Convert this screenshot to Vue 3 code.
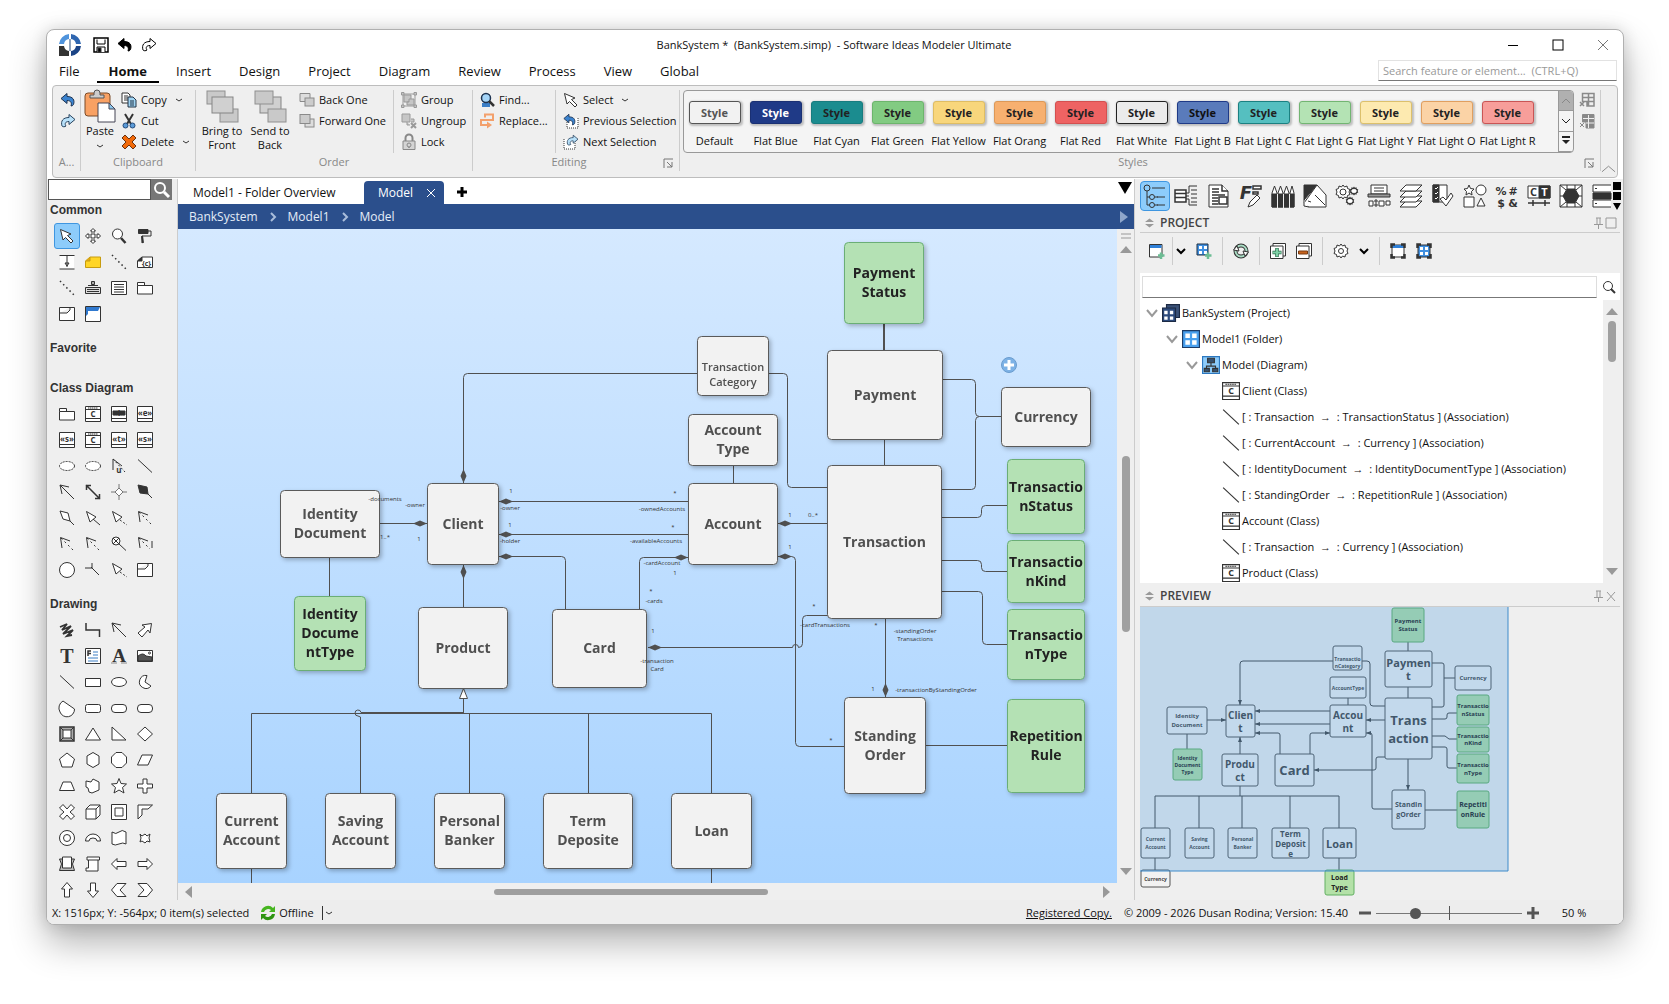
<template>
  <div class="stage">
    <div class="window">
      <header class="titlebar">
        <div class="quick">
          <svg class="logo" viewBox="0 0 22 22">
            <path d="M10 0A11 11 0 0 0 0 10H5A6 6 0 0 1 10 5Z" fill="#4f93dc" />
            <path d="M12 0A11 11 0 0 1 22 10H17A6 6 0 0 0 12 5Z" fill="#2f66b0" />
            <path d="M22 12A11 11 0 0 1 12 22V17A6 6 0 0 0 17 12Z" fill="#1c4486" />
            <path d="M0 12H5A6 6 0 0 0 10 17V22H0Z" fill="#333" />
            <path d="M11 5V17" stroke="#8fa3bd" stroke-width="2" />
          </svg>
          <button v-for="n in ['save', 'undoBlack', 'redoBlack']" :key="n" class="icon-btn" :aria-label="n">
            <svg class="pic" viewBox="0 0 16 16" v-html="icons[n]"></svg>
          </button>
        </div>
        <div class="title">BankSystem *&nbsp; (BankSystem.simp)&nbsp; - Software Ideas Modeler Ultimate</div>
        <div class="win-buttons">
          <button aria-label="Minimize"><svg viewBox="0 0 12 12"><path d="M1 6.5H11" /></svg></button>
          <button aria-label="Maximize"><svg viewBox="0 0 12 12"><rect x="1" y="1" width="10" height="10" /></svg></button>
          <button aria-label="Close" class="thin"><svg viewBox="0 0 12 12"><path d="M1 1L11 11M11 1L1 11" /></svg></button>
        </div>
      </header>

      <nav class="menubar">
        <div class="menu-items">
          <button v-for="m in menus" :key="m" class="menu-item" :class="{ active: m === activeMenu }" @click="activeMenu = m">{{ m }}</button>
        </div>
        <input class="feature-search" type="text" aria-label="Search feature" placeholder="Search feature or element...  (CTRL+Q)" />
      </nav>

      <section class="ribbon">
        <div class="group group-a">
          <div class="group-body column">
            <button class="cmd" aria-label="Undo"><svg class="pic" viewBox="0 0 16 16" v-html="icons.undo"></svg></button>
            <button class="cmd" aria-label="Redo"><svg class="pic" viewBox="0 0 16 16" v-html="icons.redo"></svg></button>
          </div>
          <div class="group-label">A...</div>
        </div>

        <div class="group group-clipboard">
          <div class="group-body">
            <button class="big-cmd paste">
              <svg class="pic32" viewBox="0 0 32 32" v-html="icons.paste"></svg>
              <span>Paste</span>
              <svg class="chev" viewBox="0 0 8 4"><path d="M1 1L4 3L7 1" /></svg>
            </button>
            <div class="column">
              <button class="cmd"><svg class="pic" viewBox="0 0 16 16" v-html="icons.copy"></svg>Copy<svg class="chev" viewBox="0 0 8 4"><path d="M1 1L4 3L7 1" /></svg></button>
              <button class="cmd"><svg class="pic" viewBox="0 0 16 16" v-html="icons.cut"></svg>Cut</button>
              <button class="cmd"><svg class="pic" viewBox="0 0 16 16" v-html="icons.delete"></svg>Delete<svg class="chev" viewBox="0 0 8 4"><path d="M1 1L4 3L7 1" /></svg></button>
            </div>
          </div>
          <div class="group-label">Clipboard</div>
        </div>

        <div class="group group-order">
          <div class="group-body">
            <button class="big-cmd"><svg class="pic32" viewBox="0 0 32 32" v-html="icons.bringFront"></svg><span>Bring to<br />Front</span></button>
            <button class="big-cmd"><svg class="pic32" viewBox="0 0 32 32" v-html="icons.sendBack"></svg><span>Send to<br />Back</span></button>
            <div class="column order-one">
              <button class="cmd"><svg class="pic" viewBox="0 0 16 16" v-html="icons.backOne"></svg>Back One</button>
              <button class="cmd"><svg class="pic" viewBox="0 0 16 16" v-html="icons.forwardOne"></svg>Forward One</button>
            </div>
            <div class="column divided">
              <button class="cmd"><svg class="pic" viewBox="0 0 16 16" v-html="icons.group"></svg>Group</button>
              <button class="cmd"><svg class="pic" viewBox="0 0 16 16" v-html="icons.ungroup"></svg>Ungroup</button>
              <button class="cmd"><svg class="pic" viewBox="0 0 16 16" v-html="icons.lock"></svg>Lock</button>
            </div>
          </div>
          <div class="group-label">Order</div>
        </div>

        <div class="group group-editing">
          <div class="group-body">
            <div class="column find">
              <button class="cmd"><svg class="pic" viewBox="0 0 16 16" v-html="icons.find"></svg>Find...</button>
              <button class="cmd"><svg class="pic" viewBox="0 0 16 16" v-html="icons.replace"></svg>Replace...</button>
            </div>
            <div class="column divided">
              <button class="cmd"><svg class="pic" viewBox="0 0 16 16" v-html="icons.cursor"></svg>Select<svg class="chev" viewBox="0 0 8 4"><path d="M1 1L4 3L7 1" /></svg></button>
              <button class="cmd"><svg class="pic" viewBox="0 0 16 16" v-html="icons.prevSel"></svg>Previous Selection</button>
              <button class="cmd"><svg class="pic" viewBox="0 0 16 16" v-html="icons.nextSel"></svg>Next Selection</button>
            </div>
          </div>
          <div class="group-label with-launcher">Editing<button class="launcher" aria-label="Editing options"><svg viewBox="0 0 10 10"><path d="M1 10V1H10M4 4L9 9M9 4V9H4" /></svg></button></div>
        </div>

        <div class="group group-styles">
          <div class="group-body">
            <div class="gallery">
              <div class="gallery-items">
                <button v-for="s in styles" :key="s.label" class="style-item">
                  <span class="swatch" :style="{ background: s.bg, borderColor: s.border, color: s.color || '#222' }">Style</span>
                  <span>{{ s.label }}</span>
                </button>
              </div>
              <div class="gallery-nav">
                <button class="off" aria-label="Up"><svg viewBox="0 0 10 6"><path d="M1 5L5 1L9 5" /></svg></button>
                <button aria-label="Down"><svg viewBox="0 0 10 6"><path d="M1 1L5 5L9 1" /></svg></button>
                <button aria-label="More"><svg viewBox="0 0 10 6"><path d="M1 -1H9" stroke-width="2" /><path d="M1 2H9L5 6Z" fill="#222" stroke="none" /></svg></button>
              </div>
            </div>
            <div class="column">
              <button class="cmd" aria-label="Clear style"><svg class="pic" viewBox="0 0 16 16" v-html="icons.gridOut"></svg></button>
              <button class="cmd" aria-label="Clear fill"><svg class="pic" viewBox="0 0 16 16" v-html="icons.gridFill"></svg></button>
            </div>
          </div>
          <div class="group-label with-launcher">Styles<button class="launcher" aria-label="Style options"><svg viewBox="0 0 10 10"><path d="M1 10V1H10M4 4L9 9M9 4V9H4" /></svg></button></div>
        </div>
        <button class="collapse" aria-label="Collapse ribbon"><svg viewBox="0 0 16 8"><path d="M1 7L8 1L15 7" /></svg></button>
      </section>

      <main class="workspace">
        <aside class="toolbox">
          <div class="tool-search">
            <input type="text" aria-label="Search tools" />
            <button aria-label="Search"><svg viewBox="0 0 18 18"><circle cx="7" cy="7" r="5" /><path d="M11 11L16 16" stroke-width="3" /></svg></button>
          </div>
          <section v-for="g in toolGroups" :key="g.name" class="tool-group">
            <h2>{{ g.name }}</h2>
            <div class="tool-grid">
              <button v-for="(t, i) in g.tools" :key="i" class="tool" :class="{ selected: t === 'cursor' }" :aria-label="t">
                <svg class="pic" viewBox="0 0 16 16" v-html="icons[t]"></svg>
              </button>
            </div>
          </section>
        </aside>

        <section class="editor">
          <div class="doc-tabs">
            <button class="doc-tab">Model1 - Folder Overview</button>
            <button class="doc-tab current">Model<svg viewBox="0 0 10 10"><path d="M1 1L9 9M9 1L1 9" /></svg></button>
            <button class="add-tab" aria-label="New tab"><svg viewBox="0 0 12 12"><path d="M6 1V11M1 6H11" /></svg></button>
            <button class="tab-list" aria-label="Tab list"><svg viewBox="0 0 14 12"><path d="M0 0H14L7 12Z" /></svg></button>
          </div>
          <div class="crumbs">
            <template v-for="(c, i) in ['BankSystem', 'Model1', 'Model']" :key="c">
              <svg v-if="i" class="crumb-sep" viewBox="0 0 6 10"><path d="M1 1L5 5L1 9" /></svg>
              <a href="#">{{ c }}</a>
            </template>
            <svg class="crumb-end" viewBox="0 0 8 12"><path d="M0 0V12L8 6Z" /></svg>
          </div>
          <div class="canvas-row">
            <svg class="canvas">
              <g :transform="`translate(${-scroll.x} ${-scroll.y})`">
                <path class="link" :d="links" />
                <path class="link double" d="M884 324V350" />
                <path class="diamond" :d="diamonds" />
                <path class="triangle" d="M463.5 688.5L467.5 698.5H459.5Z" />
                <g v-for="n in nodes" :key="n.t.join('')" class="node" :class="{ green: n.green, small: n.small }">
                  <rect :x="n.x" :y="n.y" :width="n.w" :height="n.h" rx="4" />
                  <text v-for="(line, i) in n.t" :key="i" :x="n.x + n.w / 2" :y="lineY(n, i, n.small ? 15 : 19) - 1">{{ line }}</text>
                </g>
                <text v-for="(l, i) in labels" :key="i" class="label" :x="l[1]" :y="l[2]">{{ l[0] }}</text>
                <g class="add-badge">
                  <circle cx="1009" cy="365" r="7.5" />
                  <path d="M1009 360V370M1004 365H1014" />
                </g>
              </g>
            </svg>
            <div class="vscroll">
              <svg class="grip" viewBox="0 0 10 6"><path d="M0 1H10M0 5H10" /></svg>
              <svg class="arrow" viewBox="0 0 12 7"><path d="M0 7H12L6 0Z" /></svg>
              <div class="track"><span class="before"></span><span class="thumb"></span><span class="after"></span></div>
              <svg class="arrow" viewBox="0 0 12 7"><path d="M0 0H12L6 7Z" /></svg>
            </div>
          </div>
          <div class="hscroll">
            <svg class="arrow" viewBox="0 0 7 12"><path d="M7 0V12L0 6Z" /></svg>
            <div class="track"><span class="before"></span><span class="thumb"></span><span class="after"></span></div>
            <svg class="arrow" viewBox="0 0 7 12"><path d="M0 0V12L7 6Z" /></svg>
          </div>
        </section>

        <aside class="side">
          <div class="side-tabs">
            <button v-for="(p, i) in panels" :key="p" class="side-tab" :class="{ selected: i === 0 }" :aria-label="p">
              <svg viewBox="0 0 24 24" v-html="icons[p]"></svg>
            </button>
            <svg class="more" viewBox="0 0 8 28"><path d="M0 0H8V8H0ZM0 10H8V18H0ZM0 21H8L4 28Z" /></svg>
          </div>

          <div class="panel-head">
            <svg class="updown" viewBox="0 0 10 10"><path d="M0 4H10L5 0ZM0 6H10L5 10Z" /></svg>
            <h2>PROJECT</h2>
            <svg class="pin" viewBox="0 0 24 12"><path d="M3 1H8M4 1V7M7 1V7M1 7.5H10M5.5 8V12M13 1H23V11H13Z" /></svg>
          </div>

          <div class="project-tools">
            <template v-for="(p, i) in projectTools" :key="i">
              <span v-if="p === '|'" class="sep"></span>
              <button v-else-if="p === 'v'" class="drop" aria-label="More"><svg viewBox="0 0 10 6"><path d="M1 1L5 5L9 1" /></svg></button>
              <button v-else class="icon-btn" :aria-label="p"><svg class="pic" viewBox="0 0 16 16" v-html="icons[p]"></svg></button>
            </template>
          </div>

          <div class="tree-box">
            <div class="tree-search">
              <input type="text" aria-label="Search project" />
              <button aria-label="Search"><svg viewBox="0 0 14 14"><circle cx="6" cy="6" r="4.5" /><path d="M9 9L13 13" stroke-width="2" /></svg></button>
            </div>
            <div class="tree-row">
              <ul class="tree">
                <li v-for="(r, i) in tree" :key="i" :class="`level-${r.level}`">
                  <svg v-if="r.level < 4" class="twist" viewBox="0 0 12 8"><path d="M1 1L6 7L11 1" /></svg>
                  <svg class="tree-icon" viewBox="0 0 16 16" v-html="icons[r.icon]"></svg>
                  <span>{{ r.text }}</span>
                </li>
              </ul>
              <div class="vscroll tree-scroll">
                <svg class="arrow" viewBox="0 0 12 7"><path d="M0 7H12L6 0Z" /></svg>
                <div class="track"><span class="thumb"></span><span class="after"></span></div>
                <svg class="arrow" viewBox="0 0 12 7"><path d="M0 0H12L6 7Z" /></svg>
              </div>
            </div>
          </div>

          <div class="panel-head">
            <svg class="updown" viewBox="0 0 10 10"><path d="M0 4H10L5 0ZM0 6H10L5 10Z" /></svg>
            <h2>PREVIEW</h2>
            <svg class="pin" viewBox="0 0 24 12"><path d="M3 1H8M4 1V7M7 1V7M1 7.5H10M5.5 8V12M14 2L22 11M22 2L14 11" /></svg>
          </div>
          <svg class="preview">
            <path class="mini-link" :d="miniLinks" />
            <g v-for="(n, i) in miniNodes" :key="i" class="mini-node" :class="{ green: n.green }">
              <rect :x="n.x" :y="n.y" :width="n.w" :height="n.h" rx="2" />
              <text v-for="(line, k) in n.t" :key="k" :x="n.x + n.w / 2" :y="lineY(n, k, n.lh)" :font-size="n.fs">{{ line }}</text>
            </g>
            <path class="mini-arrow" :d="miniArrows" />
            <rect class="viewport" x="-1" y="-1" width="369" height="265" />
            <path class="viewport-edge" d="M0 264H368V0" />
          </svg>
        </aside>
      </main>

      <footer class="statusbar">
        <span>X: 1516px; Y: -564px; 0 item(s) selected</span>
        <button class="offline">
          <svg class="pic" viewBox="0 0 16 16" v-html="icons.sync"></svg>Offline
        </button>
        <button class="offline-drop" aria-label="Connection"><svg class="chev" viewBox="0 0 8 4"><path d="M1 1L4 3L7 1" /></svg></button>
        <a class="registered" href="#">Registered Copy.</a>
        <span>© 2009 - 2026 Dusan Rodina; Version: 15.40</span>
        <div class="zoom">
          <button aria-label="Zoom out"><svg viewBox="0 0 12 12"><path d="M0 6H12" /></svg></button>
          <input v-model="zoom" type="range" min="0" max="200" aria-label="Zoom" />
          <button aria-label="Zoom in"><svg viewBox="0 0 12 12"><path d="M0 6H12M6 0V12" /></svg></button>
        </div>
        <span class="zoom-value">{{ zoom }} %</span>
      </footer>
    </div>
  </div>
</template>

<script setup>
import { ref } from 'vue';

const activeMenu = ref('Home');
const zoom = ref(50);
const scroll = { x: 178, y: 229 };

const menus = ['File', 'Home', 'Insert', 'Design', 'Project', 'Diagram', 'Review', 'Process', 'View', 'Global'];

const styles = [
  { label: 'Default', bg: '#f2f2f2', border: '#555', color: '#555' },
  { label: 'Flat Blue', bg: '#1f3a87', border: '#1a3073', color: '#fff' },
  { label: 'Flat Cyan', bg: '#1b8c8f', border: '#187c7f' },
  { label: 'Flat Green', bg: '#82cb82', border: '#6cb56c' },
  { label: 'Flat Yellow', bg: '#f8d67c', border: '#dfbd63' },
  { label: 'Flat Orang', bg: '#f7b070', border: '#dd9857' },
  { label: 'Flat Red', bg: '#ee6363', border: '#d45050' },
  { label: 'Flat White', bg: '#ebebeb', border: '#222' },
  { label: 'Flat Light B', bg: '#5a7bbb', border: '#1f3a87', color: '#111' },
  { label: 'Flat Light C', bg: '#55bfc0', border: '#1b8081' },
  { label: 'Flat Light G', bg: '#b4e3b4', border: '#72b572' },
  { label: 'Flat Light Y', bg: '#fdeab0', border: '#dcc06c' },
  { label: 'Flat Light O', bg: '#fbd3a6', border: '#e09f60' },
  { label: 'Flat Light R', bg: '#f79e9a', border: '#c95555' },
];

const toolGroups = [
  {
    name: 'Common',
    tools: ['cursor', 'move', 'magnify', 'roller', 'spacing', 'note', 'dotLine', 'tagNote',
      'dotLine', 'stamp', 'listBox', 'folder', 'frame', 'blueFrame'],
  },
  { name: 'Favorite', tools: [] },
  {
    name: 'Class Diagram',
    tools: ['folder', 'classC', 'classI', 'classE', 'classS', 'classC', 'classT', 'classS',
      'dashEllipse', 'dashEllipse', 'useArrow', 'line', 'openArrow', 'twoArrow', 'star4', 'diamondFull',
      'diamondEmpty', 'triArrow', 'triDash', 'dashArrow', 'dashArrow', 'dashArrow', 'crossCircle', 'dashArrowI',
      'circle', 'fork', 'triDash', 'frame'],
  },
  {
    name: 'Drawing',
    tools: ['scribble', 'zigzag', 'openArrow', 'fatArrow', 'textT', 'richText', 'wordArt', 'image',
      'line', 'rect', 'ellipse', 'pie', 'chord', 'round1', 'round2', 'round2',
      'bevel', 'triangle', 'rightTri', 'rhomb', 'pentagon', 'hexagon', 'octagon', 'parallel',
      'trapez', 'freePoly', 'star5', 'plus', 'cross', 'cube', 'innerRect', 'corner',
      'ring', 'arc', 'flag', 'burst', 'ribbonBanner', 'scrollShape', 'arrowL', 'arrowR',
      'arrowU', 'arrowD', 'chevL', 'chevR'],
  },
];

const panels = ['pTree', 'pBox', 'pDoc', 'pFormat', 'pPencils', 'pSheet', 'pGears', 'pPrint', 'pLayers', 'pCheck', 'pShapes', 'pSymbols', 'pCT', 'pHex', 'pRows'];
const projectTools = ['addDiagram', '|', 'v', 'addFolder', '|', 'refresh', '|', 'expand', 'collapse', '|', 'gear', 'v', '|', 'locate', 'locateModel'];

const tree = [
  { level: 1, icon: 'tProject', text: 'BankSystem (Project)' },
  { level: 2, icon: 'tFolder', text: 'Model1 (Folder)' },
  { level: 3, icon: 'tDiagram', text: 'Model (Diagram)' },
  { level: 4, icon: 'classC', text: 'Client (Class)' },
  { level: 4, icon: 'line', text: '[ : Transaction  →  : TransactionStatus ] (Association)' },
  { level: 4, icon: 'line', text: '[ : CurrentAccount  →  : Currency ] (Association)' },
  { level: 4, icon: 'line', text: '[ : IdentityDocument  →  : IdentityDocumentType ] (Association)' },
  { level: 4, icon: 'line', text: '[ : StandingOrder  →  : RepetitionRule ] (Association)' },
  { level: 4, icon: 'classC', text: 'Account (Class)' },
  { level: 4, icon: 'line', text: '[ : Transaction  →  : Currency ] (Association)' },
  { level: 4, icon: 'classC', text: 'Product (Class)' },
];

const nodes = [
  { x: 844.5, y: 242.5, w: 79, h: 81, t: ['Payment', 'Status'], green: true },
  { x: 697.5, y: 336.5, w: 71, h: 59, t: ['Transaction', 'Category'], small: true, dy: 9 },
  { x: 688.5, y: 414.5, w: 89, h: 51, t: ['Account', 'Type'] },
  { x: 688.5, y: 483.5, w: 89, h: 81, t: ['Account'] },
  { x: 827.5, y: 350.5, w: 115, h: 89, t: ['Payment'] },
  { x: 827.5, y: 465.5, w: 114, h: 153, t: ['Transaction'] },
  { x: 1001.5, y: 387.5, w: 89, h: 59, t: ['Currency'] },
  { x: 1007.5, y: 459.5, w: 77, h: 74, t: ['Transactio', 'nStatus'], green: true },
  { x: 1007.5, y: 540.5, w: 77, h: 62, t: ['Transactio', 'nKind'], green: true },
  { x: 1007.5, y: 609.5, w: 77, h: 70, t: ['Transactio', 'nType'], green: true },
  { x: 1007.5, y: 699.5, w: 77, h: 93, t: ['Repetition', 'Rule'], green: true },
  { x: 844.5, y: 697.5, w: 81, h: 96, t: ['Standing', 'Order'] },
  { x: 280.5, y: 490.5, w: 99, h: 67, t: ['Identity', 'Document'] },
  { x: 294.5, y: 596.5, w: 71, h: 74, t: ['Identity', 'Docume', 'ntType'], green: true },
  { x: 427.5, y: 483.5, w: 71, h: 81, t: ['Client'] },
  { x: 418.5, y: 607.5, w: 89, h: 81, t: ['Product'] },
  { x: 552.5, y: 609.5, w: 94, h: 78, t: ['Card'] },
  { x: 216.5, y: 793.5, w: 70, h: 75, t: ['Current', 'Account'] },
  { x: 325.5, y: 793.5, w: 70, h: 75, t: ['Saving', 'Account'] },
  { x: 434.5, y: 793.5, w: 70, h: 75, t: ['Personal', 'Banker'] },
  { x: 543.5, y: 793.5, w: 89, h: 75, t: ['Term', 'Deposite'] },
  { x: 671.5, y: 793.5, w: 80, h: 75, t: ['Loan'] },
];

const links = [
  'M884.5 440V466M733.5 466V484M329.5 558V597M463.5 564V608M885.5 618V698',
  'M463.5 484V377.5Q463.5 373.5 467.5 373.5H698',
  'M768 373.5H783.5Q787.5 373.5 787.5 377.5V483.5Q787.5 487.5 791.5 487.5H828',
  'M379 523.5H428M498 501.5H689M498 534.5H689M777 523.5H828M925 745.5H1008',
  'M498 556.5H561.5Q565.5 556.5 565.5 560.5V610',
  'M639.5 610V561.5Q639.5 557.5 643.5 557.5H689',
  'M777 556.5H791.5Q795.5 556.5 795.5 560.5V742.5Q795.5 746.5 799.5 746.5H845',
  'M828 615.5H806.5Q802.5 615.5 802.5 619.5V643.5Q802.5 647.5 798.5 647.5A3 3 0 0 0 792.5 647.5H648',
  'M942 379.5H971.5Q975.5 379.5 975.5 383.5V412.5Q975.5 416.5 979.5 416.5H1002',
  'M942 489.5H971.5Q975.5 489.5 975.5 485.5V420.5Q975.5 416.5 979.5 416.5',
  'M942 517.5H977.5Q981.5 517.5 981.5 513.5V509.5Q981.5 505.5 985.5 505.5H1008',
  'M942 560.5H977.5Q981.5 560.5 981.5 564.5V567.5Q981.5 571.5 985.5 571.5H1008',
  'M942 591.5H978.5Q982.5 591.5 982.5 595.5V640.5Q982.5 644.5 986.5 644.5H1008',
  'M463.5 698V713.5M251.5 794V713.5H711.5V794M360.5 794V717L358 716A3 3 0 1 1 361 712.5H463M469.5 794V713.5M588.5 794V713.5',
  'M251.5 868V884M711.5 868V884',
].join('');

const hDiamond = (x, y) => `M${x} ${y}L${x + 7} ${y - 3}L${x + 14} ${y}L${x + 7} ${y + 3}Z`;
const vDiamond = (x, y) => `M${x} ${y}L${x + 3} ${y + 7}L${x} ${y + 14}L${x - 3} ${y + 7}Z`;
const diamonds = [
  hDiamond(499, 501.5), hDiamond(499, 534.5), hDiamond(499, 556.5), hDiamond(413, 523.5),
  hDiamond(674, 557.5), hDiamond(778, 523.5), hDiamond(778, 556.5), hDiamond(648, 647.5),
  vDiamond(463.5, 469), vDiamond(463.5, 565), vDiamond(885.5, 683),
].join('');

const labels = [
  ['-documents', 385, 499], ['-owner', 415, 505], ['1..*', 385, 537], ['1', 419, 539],
  ['1', 511, 491], ['-owner', 510, 508], ['*', 675, 493], ['-ownedAccounts', 662, 509],
  ['1', 510, 525], ['*', 673, 527], ['-availableAccounts', 656, 541], ['-holder', 510, 541],
  ['-cardAccount', 662, 563], ['1', 675, 573], ['*', 651, 591], ['-cards', 654, 601],
  ['1', 653, 631], ['-transaction', 657, 661], ['Card', 657, 669], ['1', 790, 515],
  ['0..*', 813, 515], ['1', 790, 547], ['*', 814, 606], ['-cardTransactions', 825, 625],
  ['*', 876, 625], ['-standingOrder', 915, 631], ['Transactions', 915, 639], ['1', 873, 689],
  ['-transactionByStandingOrder', 936, 690], ['*', 831, 740],
];

const miniNodes = [
  { x: 252, y: 1, w: 32, h: 34, t: ['Payment', 'Status'], fs: 6, lh: 8, green: true },
  { x: 193, y: 39, w: 29, h: 24, t: ['Transactio', 'nCategory'], fs: 5, lh: 7, dy: 4 },
  { x: 190, y: 70, w: 36, h: 21, t: ['AccountType'], fs: 5, lh: 8 },
  { x: 245, y: 44, w: 47, h: 36, t: ['Paymen', 't'], fs: 11, lh: 13 },
  { x: 315, y: 59, w: 36, h: 24, t: ['Currency'], fs: 6, lh: 8 },
  { x: 190, y: 98, w: 36, h: 32, t: ['Accou', 'nt'], fs: 10, lh: 13 },
  { x: 245, y: 91, w: 47, h: 61, t: ['Trans', 'action'], fs: 13, lh: 18 },
  { x: 317, y: 88, w: 32, h: 30, t: ['Transactio', 'nStatus'], fs: 6, lh: 8, green: true },
  { x: 317, y: 120, w: 32, h: 25, t: ['Transactio', 'nKind'], fs: 6, lh: 7, green: true },
  { x: 317, y: 147, w: 32, h: 29, t: ['Transactio', 'nType'], fs: 6, lh: 8, green: true },
  { x: 317, y: 184, w: 32, h: 37, t: ['Repetiti', 'onRule'], fs: 7, lh: 10, green: true },
  { x: 252, y: 183, w: 33, h: 39, t: ['StandIn', 'gOrder'], fs: 7, lh: 10 },
  { x: 27, y: 100, w: 40, h: 27, t: ['Identity', 'Document'], fs: 6, lh: 9 },
  { x: 33, y: 142, w: 29, h: 31, t: ['Identity', 'Document', 'Type'], fs: 5, lh: 7, green: true },
  { x: 86, y: 98, w: 29, h: 32, t: ['Clien', 't'], fs: 10, lh: 13 },
  { x: 82, y: 147, w: 36, h: 32, t: ['Produ', 'ct'], fs: 10, lh: 13 },
  { x: 135, y: 147, w: 39, h: 32, t: ['Card'], fs: 13, lh: 13 },
  { x: 1, y: 221, w: 29, h: 30, t: ['Current', 'Account'], fs: 5, lh: 8 },
  { x: 45, y: 221, w: 29, h: 30, t: ['Saving', 'Account'], fs: 5, lh: 8 },
  { x: 88, y: 221, w: 29, h: 30, t: ['Personal', 'Banker'], fs: 5, lh: 8 },
  { x: 132, y: 221, w: 37, h: 30, t: ['Term', 'Deposit', 'e'], fs: 8, lh: 10 },
  { x: 183, y: 221, w: 33, h: 30, t: ['Loan'], fs: 11, lh: 13 },
  { x: 1, y: 263, w: 29, h: 17, t: ['Currency'], fs: 5, lh: 8 },
  { x: 185, y: 263, w: 29, h: 25, t: ['Load', 'Type'], fs: 7, lh: 10, green: true },
];

const miniLinks = [
  'M268 35V44M268 80V91M268 152V183M285 203H317M47 127V142M100 130V147M208 91V98M67 113H86M226 113H245',
  'M100 98V57Q100 54 103 54H193M222 54H227Q230 54 230 57V96Q230 99 233 99H245',
  'M292 56H302Q304 56 304 58V98Q304 100 302 100H292M304 71H315',
  'M292 112H305Q307 112 307 110V108Q307 106 309 106H317M292 129H305L309 132H317M292 140H305Q307 140 307 142V159Q307 161 309 161H317',
  'M226 126H230Q232 126 232 128V200Q232 202 234 202H252M174 163H234Q236 163 236 161V152Q236 150 238 150H245',
  'M115 104H190M115 117H190M115 126H138Q140 126 140 128V147M170 147V128Q170 126 172 126H190',
  'M100 179V189M15 221V189H199V221M59 189V221M102 189V221M150 189V221M15 251V263M199 251V263',
].join('');
const miniArrows = 'M115 104l5-2v4ZM115 117l5-2v4ZM115 126l5-2v4ZM226 113l5-2v4ZM226 126l5-2v4ZM174 163l5-2v4ZM86 113l-5-2v4ZM190 126l-5-2v4ZM100 98l-2-5h4ZM100 130l-2 5h4ZM268 183l-2-5h4Z';

const lineY = (n, i, lh) => n.y + n.h / 2 + (n.dy || 0) + (i - (n.t.length - 1) / 2) * lh;

// UML class glyphs share the framed box and differ in the letter
const classBox = (s, size = 8) =>
  `<path d="M.5 .5H15.5V15.5H.5ZM.5 3.5H15.5M.5 12.5H15.5"/><text x="8" y="11" font-size="${size}">${s}</text>`;
const stereo = (s) => `<path d="M.5 .5H15.5V15.5H.5ZM.5 12.5H15.5"/><text x="8" y="10" font-size="8">${s}</text>`;
const tiles = (x, y, s) => `<path fill="#fff" stroke="none" d="M${x} ${y}h${s}v${s}h-${s}ZM${x + s + 2} ${y}h${s}v${s}h-${s}ZM${x} ${y + s + 2}h${s}v${s}h-${s}ZM${x + s + 2} ${y + s + 2}h${s}v${s}h-${s}Z"/>`;
const squares = (list) => list.map(([x, y, w]) => `<rect x="${x}" y="${y}" width="${w}" height="${w - 5}" fill="#c9c9c9" stroke="#8f8f8f"/>`).join('');
const undoPath = 'M1 6.5L7 1.5V4.5C13 4.5 15 8 13.5 12.5C13 13.5 12 14 11 14C12 11 11 8.5 7 8.5V11.5Z';
const redoPath = 'M15 6.5L9 1.5V4.5C3 4.5 .5 8 2 13C2.5 14 5 14 6 13C4.5 11 5 8.5 9 8.5V11.5Z';
const gearPath = 'M8 1L9.5 3L12 2L12.5 4.5L15 5.5L14 8L15 10.5L12.5 11.5L12 14L9.5 13L8 15L6.5 13L4 14L3.5 11.5L1 10.5L2 8L1 5.5L3.5 4.5L4 2L6.5 3Z';

const icons = {
  save: '<path d="M1 1H15V15H1Z" stroke="#000" stroke-width="1.5"/><path d="M4 2.5V7H12V2.5M4 15V10H12V15" stroke="#000"/><path d="M5 11H8V15H5Z" fill="#000"/>',
  undoBlack: `<path d="${undoPath}" fill="#000" stroke="#000"/>`,
  redoBlack: `<path d="${redoPath}" stroke="#000"/>`,
  undo: `<path d="${undoPath}" fill="#3b83cf" stroke="#1e3350"/>`,
  redo: `<path d="${redoPath}" fill="#b8e1fa" stroke="#28435e"/>`,
  paste: '<rect x="1" y="3" width="25" height="23" rx="3" fill="#f9a163" stroke="#7a4a28"/><path d="M6 8V5H10V3A3 3 0 0 1 16 3V5H20V8Z" fill="#ccc" stroke="#555"/><path d="M14 13H25L31 19V32H14Z" stroke="#445"/><path d="M25 13V19H31Z" fill="#8cc8ee" stroke="#445"/>',
  copy: '<path d="M1 1H7L9 3V11H1Z" /><path d="M3 4H7M3 6H7M3 8H7" /><path d="M7 5H12L15 8V15H7Z" fill="#9fd3f2" stroke="#234"/><path d="M9 9H13M9 11H13M9 13H13" stroke="#234"/>',
  cut: '<path d="M4 1L10 11M12 1L6 11" stroke-width="2"/><circle cx="4.5" cy="12.5" r="2.5" fill="#5b9bd8" stroke="#234a7a"/><circle cx="11.5" cy="12.5" r="2.5" fill="#5b9bd8" stroke="#234a7a"/>',
  delete: '<path d="M1 4L4 1L8 5L12 1L15 4L11 8L15 12L12 15L8 11L4 15L1 12L5 8Z" fill="#f26a0a" stroke="#6a3210"/>',
  bringFront: squares([[1, 1, 18], [14, 19, 18]]) + '<rect x="6" y="7" width="21" height="16" fill="#d0d0d0" stroke="#858585"/>',
  sendBack: '<rect x="6" y="7" width="21" height="16" fill="#d0d0d0" stroke="#858585"/>' + squares([[1, 1, 18], [14, 19, 18]]),
  backOne: '<path d="M1 1.5H11V9.5H1Z" fill="#ddd" stroke="#8a8a8a"/><rect x="6" y="6" width="9" height="8" fill="#ccc" stroke="#8a8a8a"/>',
  forwardOne: '<rect x="6" y="6" width="9" height="8" fill="#ddd" stroke="#8a8a8a"/><rect x="1" y="1.5" width="10" height="9" fill="#ccc" stroke="#8a8a8a"/>',
  group: '<g fill="#c6c6c6" stroke="#999"><path d="M2 2H14V14H2Z" fill="none"/><path d="M3 3H10V10H3Z"/><path d="M8 7H13V13H6V10H8Z"/><path d="M.5 .5H3V3H.5ZM13 .5H15.5V3H13ZM.5 13H3V15.5H.5ZM13 13H15.5V15.5H13Z"/></g>',
  ungroup: '<g fill="#c6c6c6" stroke="#999"><path d="M1 1H9V9H1Z"/><path d="M6 9V12H9"/><path d="M10 6H13V9H10"/><path d="M10 10L15 15M15 10L10 15" stroke-width="2"/></g>',
  lock: '<g fill="#d4d4d4" stroke="#888"><path d="M4.5 7V4A3.5 3.5 0 0 1 11.5 4V7" fill="none" stroke-width="2"/><path d="M2 7H14V15.5H2Z"/><path d="M8 9V14" stroke="#666"/><circle cx="8" cy="11" r="2"/></g>',
  find: '<path d="M3 11H11V15H3Z" fill="#3b7ec6" stroke="none"/><circle cx="7" cy="6" r="4.5" fill="#a5d5f8" stroke="#1e3350" stroke-width="1.5"/><path d="M10 9L15 14" stroke-width="2.5"/>',
  replace: '<path d="M6 4.500V1.500H14V7H2V12H9" fill="none" stroke="#f3a06c" stroke-width="2"/><path d="M8 8.5L13 12L8 15.5Z" fill="#f3a06c" stroke="none"/>',
  prevSel: `<path d="M4 5V15H15V5" stroke-dasharray="1 1"/><path d="${undoPath}" fill="#3b83cf" stroke="#1e3350" transform="scale(.85)"/>`,
  nextSel: `<path d="M1 5V15H12V5" stroke-dasharray="1 1"/><path d="${redoPath}" fill="#b8e1fa" stroke="#28435e" transform="translate(3 0) scale(.8)"/>`,
  gridOut: '<g stroke="#8a8a8a" fill="#eee" stroke-width="1.5"><path d="M3.5 1.5H15V14H8V9.500H3.5ZM3.5 5.5H15M8 9.5H15M9.5 1.5V14"/><path d="M1 10L5 14M5 10L1 14"/></g>',
  gridFill: '<g stroke="#8a8a8a"><path d="M3.5 1.5H15V15H7V9H3.5Z" fill="#888"/><path d="M4 5.5H15M7 10H15M9.5 2V15" stroke="#eee"/><path d="M1 10L5 14M5 10L1 14"/></g>',

  cursor: '<path d="M1.5 1.5L4 12L6.5 9.5L12 15L14 13L8.5 7.5L12 6Z"/>',
  move: '<path d="M8 .5L10.5 3H9V7H13V5.5L15.5 8L13 10.5V9H9V13H10.5L8 15.5L5.5 13H7V9H3V10.5L.5 8L3 5.5V7H7V3H5.5Z"/>',
  magnify: '<circle cx="6.5" cy="6" r="5"/><path d="M10 10L14.5 15" stroke-width="2.5"/>',
  roller: '<path d="M1.5 1.5H11V5.5H1.5Z" fill="#333"/><path d="M11 3H14V8H5V15" fill="none"/><path d="M5 8L6 15" stroke-width="2"/>',
  spacing: '<path d="M1 1H15V15H1Z" stroke="none"/><path d="M.5 1.5H15.5M.5 15H15.5M8 2V13M6 9L8 12L10 9Z"/>',
  note: '<path d="M5 3H15.5V13.5H.5V7Z" fill="#ffd526" stroke="#c79c10"/><path d="M5 3V7H.5" fill="#e0a91a" stroke="#c79c10"/>',
  dotLine: '<path d="M1 1L15 15" stroke-dasharray="1.5 3" stroke-width="1.5"/>',
  tagNote: '<path d="M5 3H15.5V13.5H.5V7Z"/><path d="M5 3V7H.5Z" fill="#333"/><text x="9.5" y="11.5" font-size="7">{c}</text>',
  stamp: '<path d="M.5 7.5H15.5V13.5H.5Z" fill="#ddd"/><path d="M2 9.5H14M2 11.5H14"/><path d="M6.5 1.5H9.5V4.5H6.5ZM3 5.5H13" fill="#aaa"/>',
  listBox: '<path d="M.5 1.5H15.5V14.5H.5Z"/><path d="M3 4.5H13M3 7H13M3 9.5H13M3 12H13"/>',
  folder: '<path d="M.5 5.5H15.5V14H.5ZM.5 5.5V2.5H7.5V5.5"/>',
  frame: '<path d="M.5 1.5H15.5V14.5H.5ZM.5 7H8L11 4V1.5"/>',
  blueFrame: '<path d="M.5 .5H15.5V15.5H.5Z"/><path d="M1 1H15L13 5H3V8L1 10Z" fill="#3079cf" stroke="none"/>',
  classC: classBox('C') + '<path d="M3 2H13" stroke-dasharray="1.5 .5"/>',
  classI: stereo('«I»') + '<path d="M2 5H14V9H2Z" fill="#333"/>',
  classE: stereo('«e»'),
  classS: stereo('«s»'),
  classT: stereo('«t»'),
  dashEllipse: '<ellipse cx="8" cy="8" rx="7.5" ry="4.5" stroke-dasharray="2 1"/>',
  useArrow: '<path d="M2 12V1L11 8" fill="none"/><path d="M2 1L14 14" stroke-dasharray="2 2"/><text x="8" y="15" font-size="8">u</text>',
  line: '<path d="M1 1.5L15 14.5"/>',
  openArrow: '<path d="M3 10L1 1L10 3M1 1L15 15" fill="none"/>',
  twoArrow: '<path d="M1 1L15 15M1.5 6V1.5H6M14.5 10V14.5H10" fill="none" stroke-width="1.5"/>',
  star4: '<path d="M8 0V4M8 12V16M0 8H4M12 8H16M4 8L8 4L12 8L8 12Z" stroke="#777"/>',
  diamondFull: '<path d="M1 1L10 3L11 10L3 9Z" fill="#333"/><path d="M10 9L15 14"/>',
  diamondEmpty: '<path d="M1 1L9 3L11 11L4 9ZM11 11L15 15"/>',
  triArrow: '<path d="M1.5 1.5L11 7L5 12Z"/><path d="M8 9L15 15"/>',
  triDash: '<path d="M1.5 1.5L11 7L5 12Z"/><path d="M9 10L16 15" stroke-dasharray="2 2"/>',
  dashArrow: '<path d="M3 12L1.5 1.5L11 5" fill="none"/><path d="M2 2L15 15" stroke-dasharray="2 3"/>',
  dashArrowI: '<path d="M3 12L1.5 1.5L11 5" fill="none"/><path d="M2 2L13 13" stroke-dasharray="2 3"/><path d="M15 5V12"/>',
  crossCircle: '<circle cx="5" cy="5" r="4"/><path d="M2 2L8 8M8 2L2 8M8 8L15 14.5"/>',
  circle: '<circle cx="8" cy="8" r="7.5"/>',
  fork: '<path d="M0 6L7 6V1M6 5L14 13" fill="none"/>',
  scribble: '<path d="M1 5L8 2L3 8L12 4L4 12L14 8L8 14L13 13" fill="none" stroke-width="1.8"/>',
  zigzag: '<path d="M1 1V8H14.5V15" fill="none" stroke-width="1.5"/>',
  fatArrow: '<path d="M1 11L8 5L5 3L14.5 1.5L13 11L11 8L5 15Z"/>',
  textT: '<text x="8" y="15" font-size="20" font-family="Liberation Serif">T</text>',
  richText: '<path d="M.5 .5H15.5V15.5H.5Z"/><path d="M8 4H13M8 7H13M3 10H13M3 13H13" stroke="#3c7fc4"/><path d="M3 8V3H6M3 5.5H6" stroke-width="1.5"/>',
  wordArt: '<text x="8" y="14" font-size="19" font-family="Liberation Serif">A</text><path d="M0 15H6M10 15H16" stroke="#888"/>',
  image: '<path d="M.5 2.5H15.5V13.5H.5Z"/><path d="M1 8Q6 4 9 8L15 9V13H1Z" fill="#555"/><circle cx="12.5" cy="5" r="1"/>',
  rect: '<path d="M.5 4.5H15.5V12.5H.5Z"/>',
  ellipse: '<ellipse cx="8" cy="8" rx="7.5" ry="4.5"/>',
  pie: '<path d="M10 1.5A6.5 6.5 0 1 0 14 12L8 8Z"/>',
  chord: '<path d="M4 1L15.5 9A7.5 7.5 0 0 1 1 12A8 8 0 0 1 4 1Z"/>',
  round1: '<rect x=".5" y="4.5" width="15" height="8" rx="2"/>',
  round2: '<rect x=".5" y="4.5" width="15" height="8" rx="3.5"/>',
  bevel: '<path d="M1 1H15V15H1Z" fill="#aaa" stroke-width="1.5"/><path d="M4 4H12V12H4Z"/><path d="M1 1L4 4M15 1L12 4M1 15L4 12M15 15L12 12"/>',
  triangle: '<path d="M8 2L15.5 14H.5Z"/>',
  rightTri: '<path d="M1 1L15 14H1Z"/>',
  rhomb: '<path d="M8 1L15.5 8L8 15L.5 8Z"/>',
  pentagon: '<path d="M8 1L15.5 7L13 15H3L.5 7Z"/>',
  hexagon: '<path d="M8 .5L14 4V12L8 15.5L2 12V4Z"/>',
  octagon: '<path d="M5 .5H11L15.5 5V11L11 15.5H5L.5 11V5Z"/>',
  parallel: '<path d="M5 3H15.5L11 13H.5Z"/>',
  trapez: '<path d="M4 4H12L15.5 12.5H.5Z"/>',
  freePoly: '<path d="M1 3L6 4L8 1L14 4V12L7 15L4 14L3 10L1 9Z"/>',
  star5: '<path d="M8 .5L10 5.5L15.5 6L11.5 9.5L13 15L8 12L3 15L4.5 9.5L.5 6L6 5.5Z"/>',
  plus: '<path d="M6 1H10V6H15.5V10H10V15H6V10H.5V6H6Z"/>',
  cross: '<path d="M4 .5L8 5L12 .5L15.5 4L11 8L15.5 12L12 15.5L8 11L4 15.5L.5 12L5 8L.5 4Z"/>',
  cube: '<path d="M1 5H11V15H1ZM1 5L5 1H15V11L11 15M11 5L15 1"/>',
  innerRect: '<path d="M.5 .5H15.5V15.5H.5ZM4 4H12V12H4Z"/>',
  corner: '<path d="M1 1H15.5L11 5H5V11L1 15Z"/>',
  ring: '<circle cx="8" cy="8" r="7.5"/><circle cx="8" cy="8" r="3.5"/>',
  arc: '<path d="M.5 11A7.5 7 0 0 1 15.5 11H12A4 3 0 0 0 4 11Z"/>',
  flag: '<path d="M1 2Q5 5 8 2T15 2V14Q12 12 8 14T1 14Z"/>',
  burst: '<path d="M3 4L5 6L8 4L10 6L13 4L12 8L13 12L10 11L8 13L5 11L3 12L4 8Z"/>',
  ribbonBanner: '<path d="M.5 3H15.5L13.500 8L15.5 14.500H.5L2.500 8Z" fill="#bbb"/><path d="M3.5 1H12.5V12H3.5Z"/>',
  scrollShape: '<path d="M2 1H14.5V4H13V15H1V12H3.5V4H2Z"/><path d="M3.5 4H13"/>',
  arrowL: '<path d="M.5 8L6 2.5V5.5H15V10.5H6V13.5Z"/>',
  arrowR: '<path d="M15.5 8L10 2.5V5.5H1V10.5H10V13.5Z"/>',
  arrowU: '<path d="M8 .5L13.5 7H10.5V15H5.5V7H2.5Z"/>',
  arrowD: '<path d="M8 15.5L13.5 9H10.5V1H5.5V9H2.5Z"/>',
  chevL: '<path d="M6 1.5H15L9 8L15 14.5H6L.5 8Z"/>',
  chevR: '<path d="M1 1.5H10L15.5 8L10 14.5H1L7 8Z"/>',

  pTree: '<g fill="none"><circle cx="4" cy="4" r="3"/><circle cx="9" cy="13" r="2.5"/><circle cx="9" cy="21" r="2.5"/><path d="M4 7V21H6.5M4 13H6.5M9 4H22M14 13H22M14 21H22M12 13H15M12 21H15"/></g>',
  pBox: '<path d="M11 9H14V2H22M11 15H14V21H22M11 12H14M16 6H22M16 10H22M16 14H22M16 18H22" fill="none"/><path d="M0 6H11V18H0ZM0 9.5H11M0 13.5H11" stroke-width="1.5"/>',
  pDoc: '<path d="M2 1H15L21 7V23H2Z"/><path d="M15 1V7H21M5 5H12M5 8H12M5 11H18M5 14H11M5 17H11M5 20H11" stroke-width="1.5"/><path d="M12 13H20V20H12Z" stroke-width="1.5"/>',
  pFormat: '<text x="7" y="15" font-size="18" font-style="italic" font-family="DejaVu Sans">F</text><path d="M14 2H22V5H14ZM14 8H19V10H14Z" stroke-width="1.5"/><path d="M9 23L11 18L18 11L21 14L14 21Z"/>',
  pPencils: '<path d="M1 23V9L3.5 2L6 9V23ZM7 23V9L9.5 2L12 9V23ZM13 23V9L15.5 2L18 9V23ZM19 23V9L21 2L23 9V23Z" /><path d="M1 10H6V23H1ZM7 10H12V23H7ZM13 10H18V23H13ZM19 10H23V23H19Z" fill="#333"/><path d="M6.5 10V23M12.5 10V23M18.5 10V23" stroke="#eee"/>',
  pSheet: '<path d="M1 1H14L1 16Z" fill="#333"/><path d="M14 1L23 11V23H6L1 19Z"/><path d="M1 16V22L6 23M5 17L8 18M12 11L22 21" />',
  pGears: `<path d="${gearPath}"/><circle cx="8" cy="8" r="3"/><g transform="translate(15 3) scale(.5)"><path d="${gearPath}" stroke-width="2.5"/></g><g transform="translate(11 13) scale(.5)"><path d="${gearPath}" stroke-width="2.5"/></g>`,
  pPrint: '<path d="M4 1H20V10H4Z"/><path d="M7 4H17M7 7H17" /><path d="M1 10H23V13H1Z" fill="#999"/><path d="M2 17H6V22H2ZM8 16H10V18H8ZM8 20H10V22H8ZM12 17H17V22H12ZM19 17H23V21H19Z"/>',
  pLayers: '<path d="M7 17H23L17 23H1Z"/><path d="M7 12H23L17 18H1Z"/><path d="M7 7H23L17 13H1Z"/><path d="M7 1H23L17 7H1Z"/>',
  pCheck: '<path d="M2 1H16V18H2Z"/><path d="M2 1H8V18H2Z" fill="#333"/><path d="M4 4L5 5L7 3M4 9L5 10L7 8M4 14L5 15L7 13" stroke="#fff" fill="none"/><path d="M9 15L12 13L15 16L20 9L22 12L15 22Z"/>',
  pShapes: '<path d="M6 1L7.5 4.5L11 5L8.5 7.5L9 11L6 9L3 11L3.5 7.5L1 5L4.5 4.5Z"/><circle cx="18" cy="6" r="5"/><path d="M1 13H11V23H1ZM18 14L22 22H14Z"/>',
  pSymbols: '<g font-size="11" font-family="DejaVu Sans"><text x="6" y="11">%</text><text x="18" y="11">#</text><text x="6" y="23">$</text><text x="18" y="23">&amp;</text></g>',
  pCT: '<path d="M1 2H23V14H1Z"/><path d="M12 2H23V14H12Z" fill="#333"/><text x="6.5" y="12" font-size="11">C</text><text x="17.5" y="12" font-size="11" fill="#fff">T</text><path d="M1 19H23M6 16V22M18 16V22" stroke-width="1.5"/>',
  pHex: '<path d="M1 1H23V23H1Z"/><path d="M1 1L7 6M23 1L17 6M1 23L7 18M23 23L17 18M1 12H5M19 12H23M8 1V5M16 1V5M8 19V23M16 19V23"/><path d="M8 5H16L20 12L16 19H8L4 12Z" fill="#333"/>',
  pRows: '<path d="M19 1H1V8H19M19 16H1V23H19"/><path d="M1 9H19V15H1Z" fill="#333"/><path d="M3 4.5H5M3 19.5H5"/>',

  addDiagram: '<path d="M.5 1.5H13V14H.5Z"/><path d="M1 2H12.5V5H1Z" fill="#2f80d8" stroke="none"/><path d="M12 9.5V16M9 12.5H15.5" stroke="#6cbd94" stroke-width="2.5"/>',
  addFolder: '<path d="M1 1H12V12H1Z" fill="#3f8fe0" stroke="#234"/>' + tiles(3, 3, 3) + '<path d="M12 9.5V16M9 12.5H15.5" stroke="#6cbd94" stroke-width="2.5"/>',
  refresh: '<circle cx="8" cy="8" r="5.5" fill="none" stroke="#333" stroke-width="4"/><circle cx="8" cy="8" r="5.5" fill="none" stroke="#a9dcc4" stroke-width="2"/><path d="M10 8L15.500 9L12 13ZM6 8L.5 7L4 3Z"/>',
  expand: '<path d="M3 .5H15.5V13H3Z"/><path d="M.5 3H13V15.5H.5Z"/><path d="M7 5V14M2.5 9.5H11.5" stroke="#2c6e4c" stroke-width="3.5"/><path d="M7 5.5V13.5M3 9.5H11" stroke="#7fd0a6" stroke-width="2"/>',
  collapse: '<path d="M3 .5H15.5V13H3Z"/><path d="M.5 3H13V15.5H.5Z"/><path d="M2.5 8H11.5V11H2.5Z" fill="#c8641e" stroke="#7a3c12"/>',
  gear: `<path d="${gearPath}"/><circle cx="8" cy="8" r="2.5"/>`,
  locate: '<path d="M2 2H14V14H2Z"/><path d="M2 2H14V5H2Z" fill="#2f80d8" stroke="none"/><path d="M1.5 5V1.5H5M11 1.5H14.5V5M1.5 11V14.5H5M11 14.5H14.5V11" fill="none" stroke-width="2.5"/>',
  locateModel: '<path d="M2 2H14V14H2Z" fill="#3f8fe0"/>' + tiles(4, 4, 3) + '<path d="M1.5 5V1.5H5M11 1.5H14.5V5M1.5 11V14.5H5M11 14.5H14.5V11" fill="none" stroke-width="2.5"/>',
  tProject: '<path d="M4 .5H15.5V12H4Z" fill="#3b5278" stroke="#1c2a44"/><path d="M.5 3.5H12V15.5H.5Z" fill="#2c4a7c" stroke="#1c2a44"/>' + tiles(2, 6, 3),
  tFolder: '<path d="M.5 .5H15.5V15.5H.5Z" fill="#4aa0ee" stroke="#1c3b66"/>' + tiles(3, 3, 4),
  tDiagram: '<path d="M.5 .5H15.5V15.5H.5Z" fill="#8ccbfa" stroke="#2c78c0"/><path d="M8 6V9M4 11V9H12V11" fill="none"/><path d="M5 2H11V6H5ZM2 11H6.5V14H2ZM9.5 11H14V14H9.5Z" fill="#35506e"/>',
  sync: '<path d="M1 7A7 7 0 0 1 13 3L15 1V7H9L11 5A4.5 4.5 0 0 0 4 7Z" fill="#46b520" stroke="none"/><path d="M15 9A7 7 0 0 1 3 13L1 15V9H7L5 11A4.5 4.5 0 0 0 12 9Z" fill="#2f9412" stroke="none"/>',
};
</script>

<style>
body {
  background: #fff;
}

/* shared look of the glyphs injected into icon svgs */
svg text {
  font-weight: 700;
  text-anchor: middle;
}

.pic text,
.side-tab text,
.tree-icon text {
  fill: #333;
  stroke: none;
}

.side-tab text[fill] {
  fill: #fff;
}
</style>

<style scoped>
* {
  box-sizing: border-box;
}

.stage {
  height: 100vh;
  min-height: 700px;
  padding: 29px 45px 79px 46px;
  overflow: hidden;
  font-family: 'Open Sans', 'Noto Sans', sans-serif;
  font-size: 11px;
  line-height: 16px;
  color: #111;
}

.window {
  height: 100%;
  display: flex;
  flex-direction: column;
  background: #fff;
  border: 1px solid #b0b0b0;
  border-radius: 8px;
  overflow: hidden;
  box-shadow: 0 18px 36px rgba(0, 0, 0, 0.3), 0 0 16px rgba(0, 0, 0, 0.14);
}

button {
  padding: 0;
  border: 0;
  background: none;
  font: inherit;
  color: inherit;
  white-space: nowrap;
}

input {
  font: inherit;
  min-width: 0;
}

h2 {
  margin: 0;
}

svg {
  display: block;
  flex: none;
  overflow: visible;
}

.pic,
.pic32,
.tree-icon {
  fill: #fff;
  stroke: #333;
}

.pic {
  width: 16px;
  height: 16px;
}

.pic32 {
  width: 32px;
  height: 32px;
}

.chev {
  width: 8px;
  height: 4px;
  fill: none;
  stroke: #333;
}

/* Title bar */
.titlebar {
  display: grid;
  grid-template-columns: 1fr auto 1fr;
  align-items: center;
  height: 30px;
  flex: none;
  padding: 0 14px 0 12px;
}

.quick {
  display: flex;
  align-items: center;
  gap: 8px;
}

.logo {
  width: 22px;
  height: 22px;
  margin-right: 4px;
}

.win-buttons {
  display: flex;
  justify-content: flex-end;
  gap: 33px;
}

.win-buttons svg {
  width: 12px;
  height: 12px;
  fill: none;
  stroke: #000;
}

.win-buttons .thin svg {
  stroke: #777;
}

/* Menu bar */
.menubar {
  display: flex;
  justify-content: space-between;
  height: 25px;
  flex: none;
  padding-right: 6px;
}

.menu-items {
  display: flex;
}

.menu-item {
  height: 23px;
  padding: 0 12px;
  margin-right: 5px;
  border-bottom: 2px solid transparent;
  font-size: 13px;
}

.menu-item ~ .menu-item ~ .menu-item {
  margin-right: 4px;
}

.menu-item.active {
  font-weight: 700;
  border-color: #000;
}

.feature-search {
  width: 239px;
  height: 21px;
  padding: 0 4px;
  border: 1px solid #e2e2e2;
  border-bottom-color: #777;
}

.feature-search::placeholder {
  color: #999;
  opacity: 1;
}

/* Ribbon */
.ribbon {
  display: flex;
  height: 93px;
  margin: 0 5px;
  padding-top: 4px;
  background: #efefef;
  border: 1px solid #bdbdbd;
  border-radius: 4px;
  flex: none;
}

.group {
  height: 81px;
  flex: none;
  border-right: 1px solid #ccc;
}

.group-a {
  width: 28px;
}

.group-clipboard {
  width: 115px;
}

.group-order {
  width: 277px;
}

.group-editing {
  width: 207px;
}

.group-styles {
  flex: 1;
  min-width: 0;
}

.group-body {
  display: flex;
  height: 63px;
}

.group-label {
  display: flex;
  align-items: center;
  justify-content: center;
  height: 18px;
  color: #888;
  position: relative;
}

.with-launcher {
  padding-right: 14px;
}

.launcher {
  position: absolute;
  right: 6px;
  top: 5px;
}

.launcher svg {
  width: 10px;
  height: 10px;
  fill: none;
  stroke: #777;
}

.column {
  display: flex;
  flex-direction: column;
}

.cmd {
  display: flex;
  align-items: center;
  gap: 4px;
  height: 21px;
  padding: 0 5px 2px;
}

.group-a .cmd {
  padding-left: 7px;
}

.cmd .chev {
  margin-left: 4px;
}

.big-cmd {
  display: flex;
  flex-direction: column;
  align-items: center;
  width: 48px;
  line-height: 14px;
}

.big-cmd span {
  padding-top: 2px;
}

.big-cmd .chev {
  margin-top: 6px;
}

.big-cmd.paste {
  width: 38px;
  margin-left: 3px;
}

.group-order .group-body {
  padding-left: 2px;
}

.order-one {
  width: 99px;
}

.divided {
  border-left: 1px solid #ccc;
  padding-left: 2px;
}

.divided .cmd,
.find .cmd {
  padding-right: 2px;
}

.find {
  width: 82px;
}

.find .cmd {
  padding-left: 6px;
}

.gallery {
  display: flex;
  flex: 1;
  min-width: 0;
  margin-left: 3px;
  background: #f4f4f4;
  border: 1px solid #999;
  border-radius: 4px;
  overflow: hidden;
}

.gallery-items {
  display: flex;
  flex: 1;
  min-width: 0;
  overflow: hidden;
}

.style-item {
  display: flex;
  flex-direction: column;
  align-items: center;
  flex: none;
  gap: 9px;
  width: 61px;
  padding-top: 10px;
}

.swatch {
  width: 52px;
  height: 23px;
  border: 1px solid;
  border-radius: 3px;
  box-shadow: 1px 1px 2px 1px rgba(0, 0, 0, 0.22);
  font-weight: 700;
  line-height: 21px;
}

.gallery-nav {
  display: flex;
  flex-direction: column;
  width: 15px;
  border-left: 1px solid #999;
}

.gallery-nav button {
  display: grid;
  place-items: center;
  flex: 1;
  border-bottom: 1px solid #999;
}

.gallery-nav .off {
  background: #b0b0b0;
}

.gallery-nav svg {
  width: 10px;
  height: 6px;
  fill: none;
  stroke: #222;
}

.gallery-nav .off svg {
  stroke: #888;
}

.collapse {
  align-self: flex-end;
  width: 16px;
  padding-bottom: 4px;
}

.collapse svg {
  width: 15px;
  height: 8px;
  fill: none;
  stroke: #888;
}

/* Workspace */
.workspace {
  display: flex;
  flex: 1;
  min-height: 0;
  padding-top: 1px;
}

.toolbox {
  width: 131px;
  flex: none;
  padding-left: 1px;
  background: #efefef;
  border-right: 1px solid #ccc;
  overflow: hidden;
}

.tool-search {
  display: flex;
  width: 124px;
  height: 21px;
}

.tool-search input {
  flex: 1;
  border: 1px solid #555;
  padding: 0 4px;
}

.tool-search button {
  width: 21px;
  display: grid;
  place-items: center;
  background: #777;
}

.tool-search svg {
  width: 18px;
  height: 18px;
  fill: none;
  stroke: #fff;
  stroke-width: 2px;
}

.tool-group {
  margin-bottom: 11px;
}

.tool-group h2 {
  padding: 0 2px;
  font: 700 12px/20px 'Liberation Sans', sans-serif;
  color: #333;
}

.tool-grid {
  display: grid;
  grid-template-columns: repeat(4, 26px);
  grid-auto-rows: 26px;
  min-height: 6px;
  margin: 3px 0 0 6px;
}

.tool {
  display: grid;
  place-items: center;
  border-radius: 3px;
}

.tool.selected {
  border: 1px solid #3f96e0;
  background: #8dccfb;
}

/* Editor */
.editor {
  display: flex;
  flex-direction: column;
  flex: 1;
  min-width: 0;
  border-right: 1px solid #ccc;
}

.doc-tabs {
  display: flex;
  align-items: flex-end;
  height: 25px;
  flex: none;
}

.doc-tab {
  height: 23px;
  padding: 0 15px;
  font-size: 12px;
}

.doc-tab:first-child {
  width: 186px;
  text-align: left;
}

.doc-tab.current {
  display: flex;
  align-items: center;
  justify-content: space-between;
  width: 80px;
  padding: 0 8px 0 14px;
  background: #2b4f8c;
  color: #fff;
  border-radius: 4px 4px 0 0;
}

.doc-tab svg {
  width: 10px;
  height: 10px;
  stroke: #fff;
}

.add-tab {
  padding: 0 0 6px 12px;
}

.add-tab svg {
  width: 12px;
  height: 12px;
  stroke: #000;
  stroke-width: 3px;
}

.tab-list {
  margin: 0 2px 10px auto;
}

.tab-list svg {
  width: 14px;
  height: 12px;
}

.crumbs {
  display: flex;
  align-items: center;
  gap: 14px;
  height: 25px;
  flex: none;
  padding: 0 6px 0 11px;
  background: #2b4f8c;
}

.crumbs a {
  color: #e4edf8;
  font-size: 12px;
  text-decoration: none;
}

.crumb-sep {
  width: 6px;
  height: 10px;
  margin: 0 -2px;
  fill: none;
  stroke: #a9bddb;
  stroke-width: 2px;
}

.crumb-end {
  width: 8px;
  height: 12px;
  margin-left: auto;
  fill: #8fa6cb;
}

.canvas-row {
  display: flex;
  flex: 1;
  min-height: 0;
}

.canvas {
  flex: 1;
  min-width: 0;
  height: 100%;
  overflow: hidden;
  background: linear-gradient(#d5e9ff, #a8d3ff);
}

.canvas text {
  dominant-baseline: central;
}

.link {
  fill: none;
  stroke: #505050;
}

.double {
  stroke-width: 2px;
}

.diamond {
  fill: #505050;
}

.triangle {
  fill: #fff;
  stroke: #505050;
}

.node {
  filter: drop-shadow(2px 2px 2px rgba(0, 0, 0, 0.25));
}

.node rect {
  fill: #f2f2f2;
  stroke: #5a5a5a;
}

.node text {
  font-size: 14px;
  fill: #505050;
}

.node.small text {
  font-size: 11px;
  font-weight: 600;
}

.node.green rect {
  fill: #b4e1b4;
  stroke: #6aae76;
}

.node.green text {
  fill: #222;
}

.label {
  font-size: 6px;
  font-weight: 400;
  fill: #333;
}

.add-badge circle {
  fill: #7db2e6;
  stroke: #6a9cce;
}

.add-badge path {
  stroke: #fff;
  stroke-width: 3px;
}

.vscroll {
  display: flex;
  flex-direction: column;
  align-items: center;
  width: 17px;
  flex: none;
  padding: 4px 0 8px;
  background: #efefef;
}

.hscroll {
  display: flex;
  align-items: center;
  height: 17px;
  flex: none;
  padding: 0 24px 0 7px;
  background: #efefef;
}

.arrow,
.grip {
  width: 12px;
  height: 7px;
  fill: #999;
  stroke: none;
}

.grip {
  width: 10px;
  height: 6px;
  margin-bottom: 7px;
  stroke: #999;
}

.hscroll .arrow {
  width: 7px;
  height: 12px;
}

.track {
  display: flex;
  flex: 1;
}

.vscroll .track {
  flex-direction: column;
  width: 8px;
}

.hscroll .track {
  height: 6px;
}

.thumb {
  flex: 175;
  border-radius: 4px;
  background: #a0a0a0;
}

.vscroll .before {
  flex: 203;
}

.vscroll .after {
  flex: 236;
}

.hscroll .before {
  flex: 301;
}

.hscroll .thumb {
  flex: 274;
}

.hscroll .after {
  flex: 334;
}

/* Side panels */
.side {
  display: flex;
  flex-direction: column;
  width: 488px;
  flex: none;
  padding: 0 3px 0 5px;
  background: #efefef;
}

.side-tabs {
  display: flex;
  align-items: center;
  gap: 2px;
  height: 34px;
  flex: none;
}

.side-tab {
  display: grid;
  place-items: center;
  width: 30px;
  height: 30px;
  flex: none;
  border-radius: 4px;
}

.side-tab:nth-child(15) {
  width: 24px;
  padding-left: 4px;
}

.side-tab svg {
  width: 24px;
  height: 24px;
  fill: #fff;
  stroke: #333;
}

.side-tab.selected {
  border: 1px solid #3f96e0;
  background: #8dccfb;
}

.more {
  width: 8px;
  height: 28px;
  margin-left: -1px;
}

.panel-head {
  display: flex;
  align-items: center;
  gap: 6px;
  height: 20px;
  flex: none;
  padding: 0 3px 0 5px;
  border-bottom: 1px solid #ccc;
}

.panel-head h2 {
  font-size: 12px;
  font-weight: 600;
  color: #444;
}

.updown {
  width: 9px;
  height: 10px;
  fill: #999;
}

.pin {
  width: 24px;
  height: 12px;
  margin-left: auto;
  fill: none;
  stroke: #999;
}

.project-tools {
  display: flex;
  align-items: center;
  gap: 10px;
  height: 40px;
  flex: none;
  padding: 0 0 4px 9px;
}

.project-tools .sep {
  width: 1px;
  height: 28px;
  background: #ccc;
}

.project-tools .sep:nth-child(2) {
  margin: 0 -7px 0 -3px;
}

.drop svg {
  width: 10px;
  height: 6px;
  fill: none;
  stroke: #000;
  stroke-width: 2px;
}

.tree-box {
  display: flex;
  flex-direction: column;
  flex: 309;
  min-height: 0;
  background: #fff;
}

.tree-search {
  display: flex;
  align-items: center;
  gap: 5px;
  height: 27px;
  flex: none;
  padding: 2px 4px 2px 2px;
}

.tree-search input {
  flex: 1;
  height: 22px;
  border: 1px solid #ddd;
  border-bottom-color: #777;
}

.tree-search svg {
  width: 14px;
  height: 14px;
  fill: none;
  stroke: #333;
}

.tree-row {
  display: flex;
  flex: 1;
  min-height: 0;
}

.tree {
  flex: 1;
  min-width: 0;
  margin: 0;
  padding: 0;
  list-style: none;
  overflow: hidden;
}

.tree li {
  display: flex;
  align-items: center;
  gap: 2px;
  height: 26px;
  white-space: pre;
}

.level-1 {
  padding-left: 6px;
}

.level-2 {
  padding-left: 26px;
}

.level-3 {
  padding-left: 46px;
}

.level-4 {
  padding-left: 82px;
}

.twist {
  width: 12px;
  height: 8px;
  margin-right: 2px;
  fill: none;
  stroke: #999;
  stroke-width: 2px;
}

.tree-icon {
  width: 18px;
  height: 18px;
}

.tree-scroll {
  padding: 8px 0;
}

.tree-scroll .track {
  padding-top: 6px;
}

.tree-scroll .thumb {
  flex: 40;
}

.tree-scroll .after {
  flex: 202;
}

.tree-box + .panel-head {
  height: 24px;
  padding-top: 4px;
}

.preview {
  flex: 293;
  min-height: 0;
  width: 100%;
  overflow: hidden;
}

.preview text {
  dominant-baseline: central;
}

.mini-link {
  fill: none;
  stroke: #444;
}

.mini-arrow {
  fill: #444;
}

.mini-node rect {
  fill: #f2f2f2;
  stroke: #555;
}

.mini-node text {
  font-weight: 700;
  fill: #444;
}

.mini-node.green rect {
  fill: #b4e1a8;
  stroke: #62b062;
}

.mini-node.green text {
  fill: #222;
}

.viewport {
  fill: rgba(60, 148, 220, 0.26);
}

.viewport-edge {
  fill: none;
  stroke: #3f8bcb;
}

/* Status bar */
.statusbar {
  display: flex;
  align-items: center;
  height: 24px;
  flex: none;
  padding: 2px 12px 0 5px;
  background: #ededed;
}

.offline {
  display: flex;
  align-items: center;
  gap: 3px;
  margin-left: 11px;
}

.offline-drop {
  height: 14px;
  margin-left: 8px;
  padding-left: 2px;
  border-left: 1px solid #333;
}

.registered {
  margin: 0 12px 0 auto;
  color: #111;
}

.zoom {
  display: flex;
  align-items: center;
  gap: 5px;
  margin-left: 11px;
}

.zoom button svg {
  width: 12px;
  height: 12px;
  stroke: #555;
  stroke-width: 3px;
}

.zoom input {
  width: 146px;
  height: 14px;
  margin: 0;
  appearance: none;
  background: linear-gradient(#555, #555) 50% 50% / 1px 14px no-repeat, linear-gradient(#777, #777) 50% 50% / 100% 1px no-repeat;
}

.zoom input::-webkit-slider-thumb {
  appearance: none;
  width: 11px;
  height: 11px;
  border-radius: 50%;
  background: #555;
}

.zoom-value {
  width: 72px;
  padding-right: 2px;
  text-align: center;
}
</style>
